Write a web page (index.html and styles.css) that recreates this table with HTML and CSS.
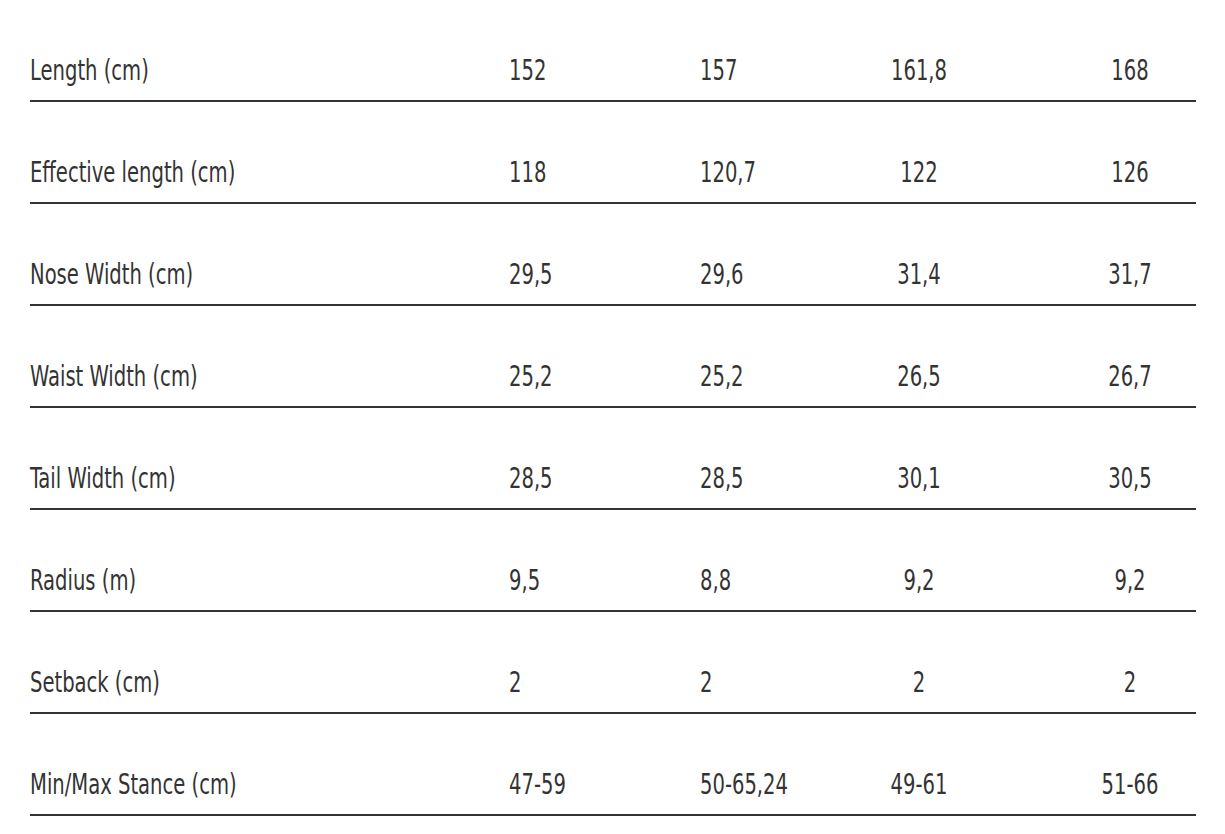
FILE: index.html
```html
<!DOCTYPE html>
<html lang="en">
<head>
  <meta charset="UTF-8" />
  <meta name="viewport" content="width=device-width, initial-scale=1" />
  <title>Board Specs</title>
  <link rel="stylesheet" href="styles.css">
</head>
<body>

  <div class="specs">
    <div class="row">
      <div class="label">Length (cm)</div>
      <div class="val">152</div>
      <div class="val">157</div>
      <div class="val c3">161,8</div>
      <div class="val c4">168</div>
    </div>
    <div class="row">
      <div class="label">Effective length (cm)</div>
      <div class="val">118</div>
      <div class="val">120,7</div>
      <div class="val c3">122</div>
      <div class="val c4">126</div>
    </div>
    <div class="row">
      <div class="label">Nose Width (cm)</div>
      <div class="val">29,5</div>
      <div class="val">29,6</div>
      <div class="val c3">31,4</div>
      <div class="val c4">31,7</div>
    </div>
    <div class="row">
      <div class="label">Waist Width (cm)</div>
      <div class="val">25,2</div>
      <div class="val">25,2</div>
      <div class="val c3">26,5</div>
      <div class="val c4">26,7</div>
    </div>
    <div class="row">
      <div class="label">Tail Width (cm)</div>
      <div class="val">28,5</div>
      <div class="val">28,5</div>
      <div class="val c3">30,1</div>
      <div class="val c4">30,5</div>
    </div>
    <div class="row">
      <div class="label">Radius (m)</div>
      <div class="val">9,5</div>
      <div class="val">8,8</div>
      <div class="val c3">9,2</div>
      <div class="val c4">9,2</div>
    </div>
    <div class="row">
      <div class="label">Setback (cm)</div>
      <div class="val">2</div>
      <div class="val">2</div>
      <div class="val c3">2</div>
      <div class="val c4">2</div>
    </div>
    <div class="row">
      <div class="label">Min/Max Stance (cm)</div>
      <div class="val">47-59</div>
      <div class="val">50-65,24</div>
      <div class="val c3">49-61</div>
      <div class="val c4">51-66</div>
    </div>
  </div>

</body>
</html>
```

FILE: styles.css
```css
body {
  margin: 0;
  background: #fff;
  font-family: "DejaVu Sans Condensed", "DejaVu Sans", sans-serif;
  color: #333;
}

.specs {
  width: 1166px;
  margin-left: 30px;
}

.row {
  display: grid;
  grid-template-columns: 479px 191px 160px 118px 86px 132px;
  align-items: end;
  height: 102px;
  box-sizing: border-box;
  padding-bottom: 15px;
  border-bottom: 2px solid #333;
  font-size: 29px;
  line-height: 30px;
}

/* the face is narrower than anything installed, so squeeze it */
.label,
.val {
  white-space: nowrap;
  transform: scaleX(0.75);
  transform-origin: left center;
}

.val.c3,
.val.c4 {
  text-align: center;
  transform-origin: center;
}

.val.c4 {
  grid-column: 6;
}
```
